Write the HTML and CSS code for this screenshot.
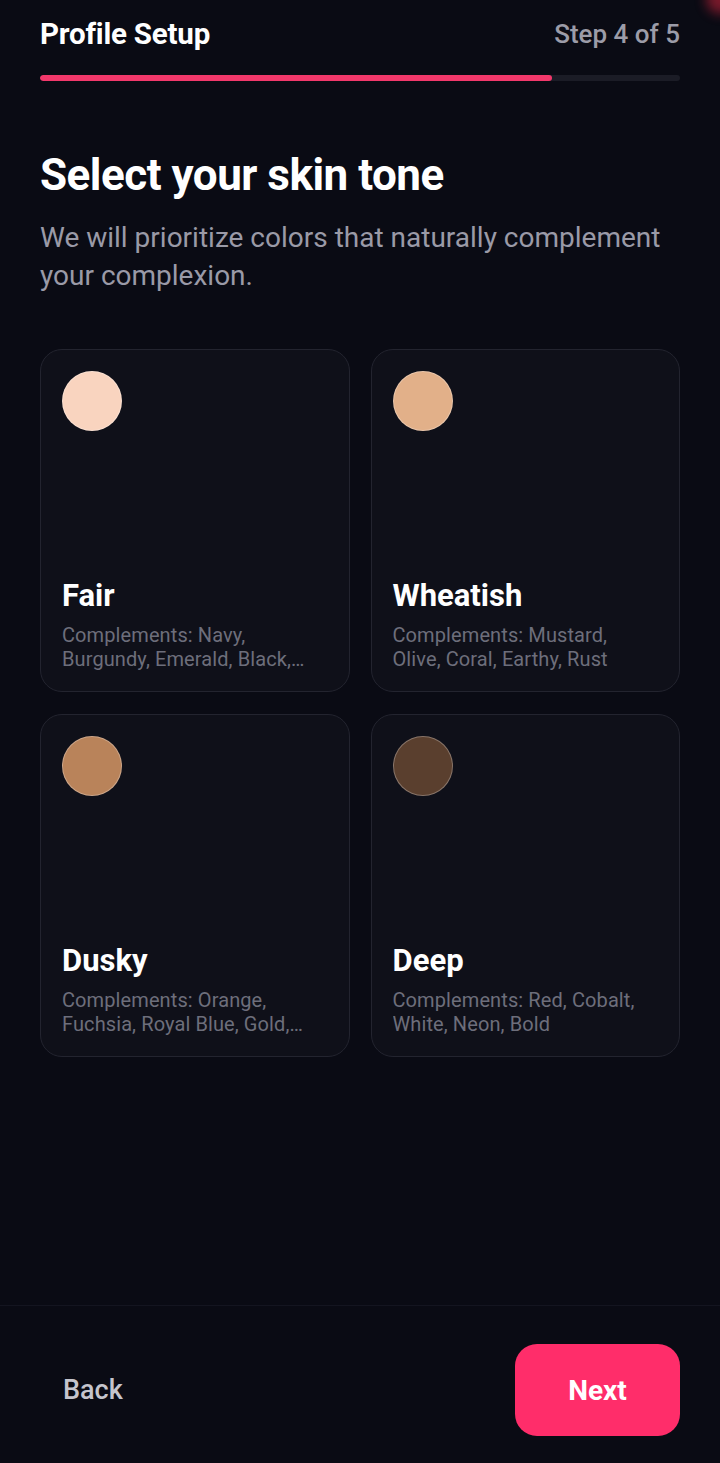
FILE: index.html
```html
<!DOCTYPE html>
<html lang="en">
<head>
	<meta charset="UTF-8">
	<title>Profile Setup</title>
	<link rel="stylesheet" href="styles.css">
</head>
<body>
	<div class="glow"></div>
	<div class="app">
		<main class="content">
			<div class="top">
				<h1 class="top-title">Profile Setup</h1>
				<span class="top-step">Step 4 of 5</span>
			</div>
			<div class="progress"><div class="progress-fill" style="width: 80%"></div></div>

			<h2 class="heading">Select your skin tone</h2>
			<p class="lead">We will prioritize colors that naturally complement your complexion.</p>

			<div class="tones">
				<div class="tone">
					<span class="swatch fair"></span>
					<div class="tone-text">
						<h3 class="tone-name">Fair</h3>
						<p class="tone-desc">Complements: Navy, Burgundy, Emerald, Black, Charcoal</p>
					</div>
				</div>
				<div class="tone">
					<span class="swatch wheatish"></span>
					<div class="tone-text">
						<h3 class="tone-name">Wheatish</h3>
						<p class="tone-desc">Complements: Mustard, Olive, Coral, Earthy, Rust</p>
					</div>
				</div>
				<div class="tone">
					<span class="swatch dusky"></span>
					<div class="tone-text">
						<h3 class="tone-name">Dusky</h3>
						<p class="tone-desc">Complements: Orange, Fuchsia, Royal Blue, Gold, Bronze</p>
					</div>
				</div>
				<div class="tone">
					<span class="swatch deep"></span>
					<div class="tone-text">
						<h3 class="tone-name">Deep</h3>
						<p class="tone-desc">Complements: Red, Cobalt, White, Neon, Bold</p>
					</div>
				</div>
			</div>
		</main>

		<footer class="actions">
			<button class="btn-back">Back</button>
			<button class="btn-next">Next</button>
		</footer>
	</div>
</body>
</html>
```

FILE: styles.css
```css
* {
	box-sizing: border-box;
}
html, body {
	margin: 0;
	padding: 0;
}
body {
	background-color: #0a0b14;
	color: #fff;
	font-family: Roboto, "Liberation Sans", sans-serif;
}
.glow {
	position: fixed;
	top: -16px;
	right: -16px;
	width: 30px;
	height: 30px;
	border-radius: 50%;
	background: #a82035;
	filter: blur(6px);
	opacity: .7;
}
.app {
	display: flex;
	flex-direction: column;
	min-height: 100vh;
}
.content {
	flex: 1;
	padding: 18px 40px 0;
}

/* header */
.top {
	display: flex;
	justify-content: space-between;
	align-items: center;
	height: 32px;
}
.top-title {
	margin: 0;
	font-size: 29.5px;
	font-weight: 700;
	letter-spacing: -0.2px;
}
.top-step {
	color: #9c9ca8;
	font-size: 26px;
	font-weight: 500;
}
.progress {
	height: 6px;
	margin-top: 25px;
	border-radius: 3px;
	background: #1b1c26;
	overflow: hidden;
}
.progress-fill {
	height: 100%;
	border-radius: 3px;
	background: #f2386b;
}

/* intro */
.heading {
	margin: 68px 0 0;
	font-size: 44px;
	line-height: 52px;
	font-weight: 700;
	letter-spacing: -0.5px;
}
.lead {
	margin: 18px 0 0;
	color: #9a9aa7;
	font-size: 28px;
	line-height: 38px;
}

/* tone cards */
.tones {
	display: grid;
	grid-template-columns: 1fr 1fr;
	grid-auto-rows: 343px;
	gap: 22px 21px;
	margin-top: 54px;
}
.tone {
	display: flex;
	flex-direction: column;
	justify-content: space-between;
	padding: 21px 21px 20px;
	border: 1.5px solid #23242f;
	border-radius: 22px;
	background: #0f1019;
}
.swatch {
	display: block;
	width: 60px;
	height: 60px;
	border-radius: 50%;
	border: 1.5px solid rgba(255,255,255,.28);
}
.swatch.fair { background: #f9d4bf; }
.swatch.wheatish { background: #e2b089; }
.swatch.dusky { background: #b9835a; }
.swatch.deep { background: #5a3f2e; }
.tone-name {
	margin: 0;
	font-size: 31px;
	line-height: 36px;
	font-weight: 700;
}
.tone-desc {
	margin: 9px 0 0;
	color: #6d6e7b;
	font-size: 20px;
	line-height: 24px;
	letter-spacing: 0.1px;
	display: -webkit-box;
	-webkit-line-clamp: 2;
	-webkit-box-orient: vertical;
	overflow: hidden;
}

/* footer */
.actions {
	display: flex;
	justify-content: space-between;
	align-items: center;
	padding: 38px 40px 27px;
	border-top: 1px solid #141520;
}
.btn-back,
.btn-next {
	border: 0;
	font-family: inherit;
	font-size: 28px;
	font-weight: 700;
	cursor: pointer;
}
.btn-back {
	padding: 0 23px;
	background: none;
	color: #c5c5cd;
	font-size: 27px;
	font-weight: 500;
}
.btn-next {
	width: 165px;
	height: 92px;
	border-radius: 22px;
	background: #ff2d6a;
	color: #fff;
}
```
